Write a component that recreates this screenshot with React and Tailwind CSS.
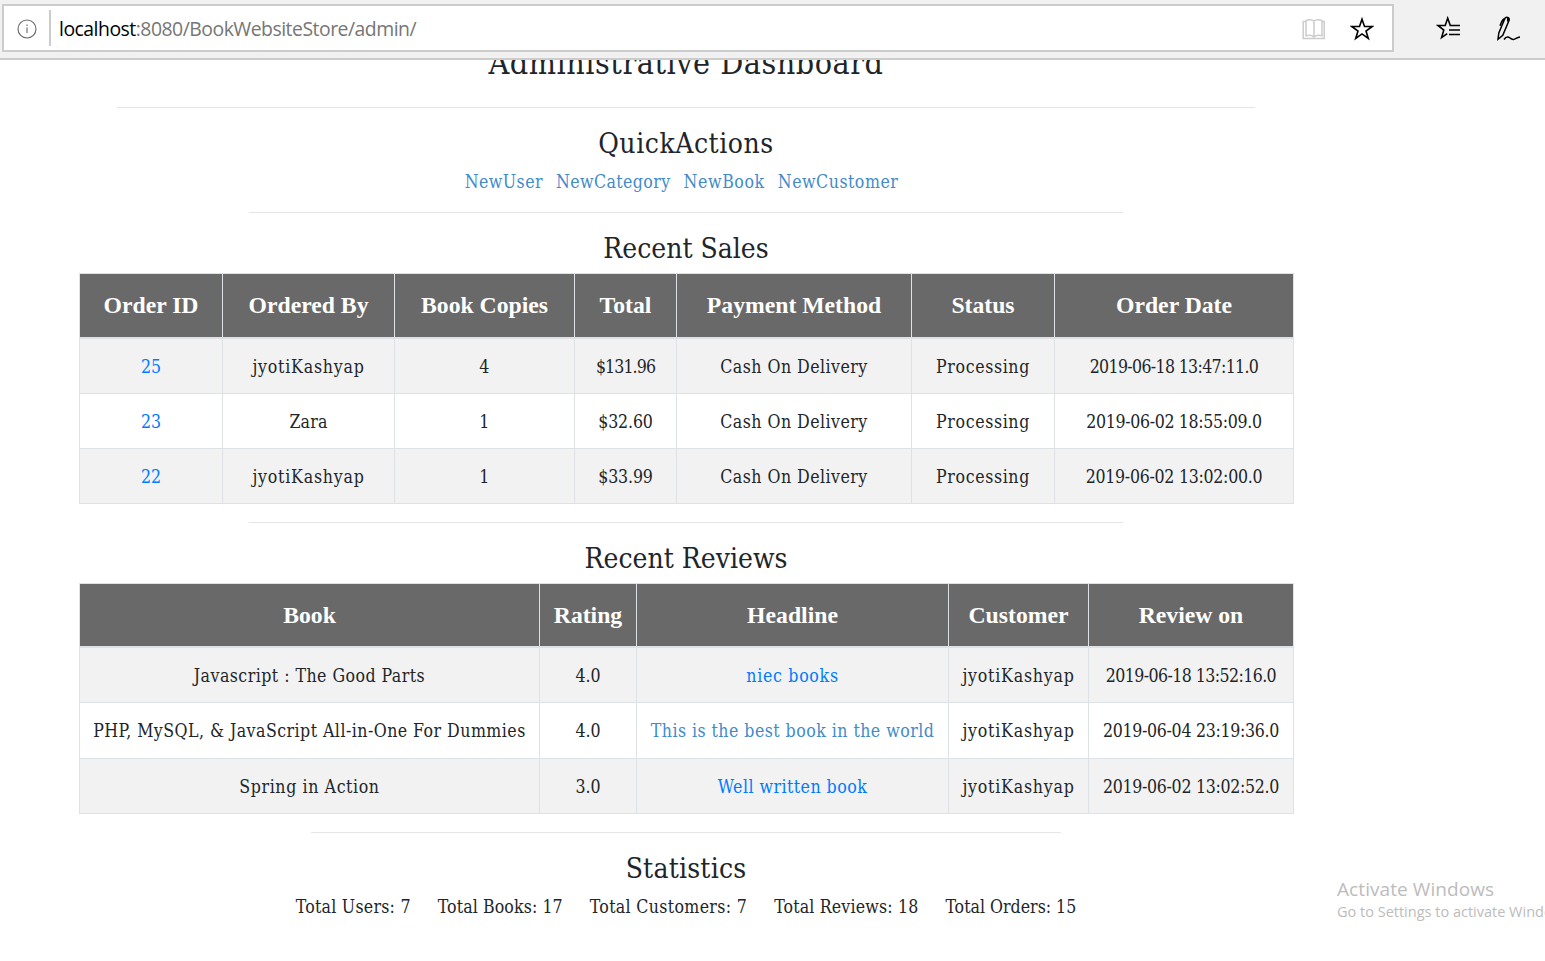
const sales = {
  head: ["Order ID", "Ordered By", "Book Copies", "Total", "Payment Method", "Status", "Order Date"],
  rows: [
    ["25", "jyotiKashyap", "4", "$131.96", "Cash On Delivery", "Processing", "2019-06-18 13:47:11.0"],
    ["23", "Zara", "1", "$32.60", "Cash On Delivery", "Processing", "2019-06-02 18:55:09.0"],
    ["22", "jyotiKashyap", "1", "$33.99", "Cash On Delivery", "Processing", "2019-06-02 13:02:00.0"],
  ],
  cols: ["w-[143px]", "w-[172px]", "w-[180px]", "w-[102px]", "w-[235px]", "w-[143px]", "w-[239px]"],
  heights: ["h-[55px]", "h-[55px]", "h-[55px]"],
  headHeight: "h-[65px]",
  headPad: "pb-[2px]",
  linkCol: 0,
};

const reviews = {
  head: ["Book", "Rating", "Headline", "Customer", "Review on"],
  rows: [
    ["Javascript : The Good Parts", "4.0", "niec books", "jyotiKashyap", "2019-06-18 13:52:16.0"],
    ["PHP, MySQL, & JavaScript All-in-One For Dummies", "4.0", "This is the best book in the world", "jyotiKashyap", "2019-06-04 23:19:36.0"],
    ["Spring in Action", "3.0", "Well written book", "jyotiKashyap", "2019-06-02 13:02:52.0"],
  ],
  cols: ["w-[460px]", "w-[97px]", "w-[312px]", "w-[140px]", "w-[205px]"],
  heights: ["h-[55px]", "h-[56px]", "h-[55px]"],
  headHeight: "h-[64px]",
  headPad: "pb-0",
  linkCol: 2,
};

const SLAB = "font-['Roboto_Slab','DejaVu_Serif_Condensed','DejaVu_Serif',serif]";

// Letter spacing per value; words not listed use the default.
const TRACKING = {
  jyotiKashyap: "tracking-[0.78px]",
  Zara: "tracking-[0.2px]",
  "$131.96": "tracking-[-0.9px]",
  "$32.60": "tracking-[-0.15px]",
  "$33.99": "tracking-[-0.15px]",
  Processing: "tracking-[0.62px]",
  "2019-06-18 13:47:11.0": "tracking-[-0.66px]",
  "2019-06-02 18:55:09.0": "tracking-[-0.34px]",
  "2019-06-02 13:02:00.0": "tracking-[-0.28px]",
  "2019-06-18 13:52:16.0": "tracking-[-0.58px]",
  "2019-06-04 23:19:36.0": "tracking-[-0.3px]",
  "2019-06-02 13:02:52.0": "tracking-[-0.3px]",
  "niec books": "tracking-[0.7px]",
  "Spring in Action": "tracking-[0.6px]",
  25: "tracking-normal",
  23: "tracking-normal",
  22: "tracking-normal",
  "4.0": "tracking-normal",
  "3.0": "tracking-normal",
};

function DataTable({ data }) {
  return (
    <table className="ml-[79px] w-[1215px] table-fixed border-separate border-spacing-0 border-l border-t border-[#dee2e6] text-center text-[17.6px] leading-[26px]">
      <colgroup>
        {data.cols.map((c, i) => <col key={i} className={c} />)}
      </colgroup>
      <thead>
        <tr className={data.headHeight}>
          {data.head.map((h) => (
            <th key={h} className={`whitespace-nowrap border-b-2 border-r border-[#dee2e6] bg-[#696969] px-0 pt-0 font-['Liberation_Serif',serif] text-[23.7px] font-bold text-white ${data.headPad}`}>{h}</th>
          ))}
        </tr>
      </thead>
      <tbody>
        {data.rows.map((r, i) => (
          <tr key={i} className={`${data.heights[i]} ${i % 2 === 0 ? "bg-[#f2f2f2]" : "bg-white"}`}>
            {r.map((c, j) => (
              <td key={j} className={`whitespace-nowrap border-b border-r border-[#dee2e6] px-0 pb-0 ${data.heights[i] === "h-[56px]" ? "pt-0" : "pt-[2px]"} ${TRACKING[c] ?? "tracking-[0.46px]"}`}>
                {j === data.linkCol ? (
                  <a className={c.startsWith("This") ? "text-[#428bca]" : "text-[#007bff]"}>{c}</a>
                ) : c}
              </td>
            ))}
          </tr>
        ))}
      </tbody>
    </table>
  );
}

function Title({ children, tracking = "tracking-normal" }) {
  return <h3 className={`flex h-[34px] items-center justify-center pt-[2px] text-[28px] ${tracking}`}>{children}</h3>;
}

export default function App() {
  return (
    <div className={`flex h-[961px] w-[1545px] flex-col overflow-hidden bg-white text-[#212529] ${SLAB}`}>
      <header className="z-10 flex h-[60px] shrink-0 border-b-2 border-[#cccccc] bg-[#f1f1f1] pl-[2px] pt-[4px] font-['Open_Sans',sans-serif]">
        <div className="flex h-12 w-[1392px] items-center border-2 border-[#cccccc] bg-white">
          <svg className="ml-[13px] mt-[1px] size-5" viewBox="0 0 20 20" fill="none" stroke="#666" strokeWidth="1.1">
            <circle cx="10" cy="10" r="9" />
            <path d="M10 8.5v5.5M10 5.6v1.3" />
          </svg>
          <div className="ml-3 h-9 w-[2px] bg-[#cccccc]" />
          <p className="ml-2 whitespace-nowrap pt-[2px] text-[19.4px] tracking-[-0.5px] text-[#767676]"><span className="text-black">localhost</span>:8080/BookWebsiteStore/admin/</p>
          <svg className="ml-auto mt-[2px] h-6 w-6" viewBox="0 0 24 24" fill="none" stroke="#cccccc" strokeWidth="1.5">
            <path d="M12 4c-2-1.600-6-1.600-8-.4v15.200c2.500-.8 6-.6 8 1 2-1.600 5.500-1.800 8-1V3.600c-2-1.200-6-1.200-8 .4zM12 4v16M4 4.500H1.200v17h21V4.500H20" />
          </svg>
          <svg className="ml-6 mr-[18px] mt-[1px] h-6 w-6" viewBox="0 0 24 24" fill="none" stroke="#000" strokeWidth="1.6">
            <path d="M12 2.200l2.500 7.300h7.700l-6.200 4.500 2.300 7.400-6.300-4.500-6.300 4.500L8 14 1.800 9.500h7.700z" />
          </svg>
        </div>
        <svg className="ml-[42px] mt-[12px] h-6 w-6" viewBox="0 0 24 24" fill="none" stroke="#000" strokeWidth="1.6">
          <path d="M17 9.500h-2.700L11.700 2.200 9.200 9.500H2L7.800 14l-2.200 7.600 5.600-4M14 9.500H24M13 14H24M13 18.500H24" />
        </svg>
        <svg className="ml-[35px] mt-[10px] h-7 w-7" viewBox="0 0 28 28" fill="none" stroke="#000" strokeWidth="1.5">
          <path d="M3 25.300l.8-6.300L9.900 4.500c1-2.400 5-1 4.200 1.700L7.800 21.300 3 25.300zM9.700 4.500C8 5 6.500 7.500 5 11.800M12.700 4v3.500M9 25.500c1.200-1.800 3-3 4.700-2.300 1.800.7 2.800 2.300 4.800 2.300 2.300 0 3-2.300 6.500-2.500" />
        </svg>
      </header>

      <main className="w-[1372px] shrink-0">
        <h1 className="-mt-[20px] flex h-[46px] items-center justify-center text-[32px] tracking-[0.52px]">Administrative Dashboard</h1>
        <hr className="mx-auto mt-[21px] w-[1138px] border-[#e5e5e5]" />
        <section className="pt-[18px]">
          <Title tracking="tracking-[0.55px]">QuickActions</Title>
          <nav className="mt-[9px] flex h-[26px] items-center justify-center gap-[13px] pr-[9px] text-[17.6px] text-[#428bca]">
            <a className="tracking-[0.45px]">NewUser</a>
            <a className="tracking-[0.4px]">NewCategory</a>
            <a className="tracking-[0.6px]">NewBook</a>
            <a className="tracking-[0.5px]">NewCustomer</a>
          </nav>
        </section>
        <hr className="mx-auto mt-[17px] w-[874px] border-[#e5e5e5]" />
        <section className="pt-[18px]">
          <Title>Recent Sales</Title>
          <div className="mt-[8px]"><DataTable data={sales} /></div>
        </section>
        <hr className="mx-auto mt-[18px] w-[874px] border-[#e5e5e5]" />
        <section className="pt-[18px]">
          <Title>Recent Reviews</Title>
          <div className="mt-[8px]"><DataTable data={reviews} /></div>
        </section>
        <hr className="mx-auto mt-[18px] w-[750px] border-[#e5e5e5]" />
        <section className="relative pt-[18px]">
          <Title tracking="tracking-[0.2px]">Statistics</Title>
          <div className="mt-[9px] flex h-[26px] items-center justify-center gap-[27px] whitespace-nowrap text-[17.6px]">
            <span className="tracking-[0.25px]">Total Users: 7</span>
            <span className="tracking-[0.1px]">Total Books: 17</span>
            <span className="tracking-[0.33px]">Total Customers: 7</span>
            <span className="tracking-[0.17px]">Total Reviews: 18</span>
            <span>Total Orders: 15</span>
          </div>
          <aside className="absolute left-[1337px] top-[43px] whitespace-nowrap font-['Open_Sans',sans-serif] text-[#bcbcbc]">
            <p className="text-[19px] leading-[26px] tracking-[0.08px]">Activate Windows</p>
            <p className="text-[14.5px] leading-5">Go to Settings to activate Windows.</p>
          </aside>
        </section>
      </main>
    </div>
  );
}
